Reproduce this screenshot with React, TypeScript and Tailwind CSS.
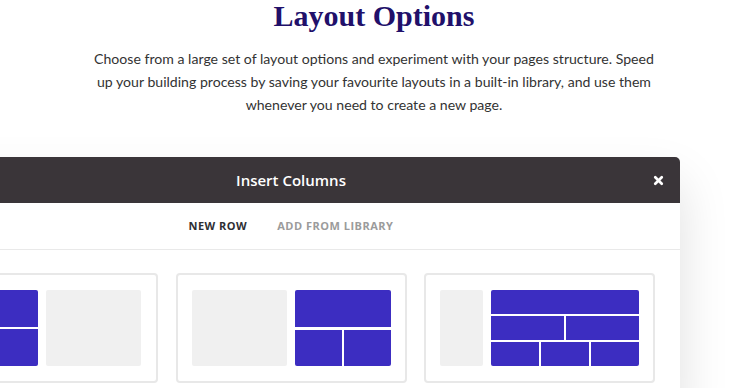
import { X } from "lucide-react";

const BLUE = "bg-[#3c2dc1]";

function Card({ children }: { children: React.ReactNode }) {
  return (
    <div className="flex h-[110px] w-[231px] shrink-0 gap-[8px] rounded-[4px] border-2 border-[#e8e8e8] bg-white px-[14px] py-[15px]">
      {children}
    </div>
  );
}

export default function App() {
  return (
    <div className="h-[388px] w-[748px] overflow-hidden bg-white" style={{ fontFamily: "Lato, 'Open Sans', sans-serif" }}>
      <h1 className="text-center text-[30px] font-bold leading-[31px] text-[#21106a] [font-family:'Liberation_Serif',serif]">
        Layout Options
      </h1>
      <p className="mx-auto mt-[16px] w-[568px] text-center text-[14.1px] leading-[23px] text-[#333333]">
        Choose from a large set of layout options and experiment with your pages structure. Speed up your building process by saving your favourite layouts in a built-in library, and use them whenever you need to create a new page.
      </p>

      <div className="ml-[-98px] mt-[41px] w-[778px] rounded-t-[5px] bg-white shadow-[0_25px_50px_rgba(0,0,0,0.13)] [font-family:'Open_Sans',sans-serif]">
        <div className="relative flex h-[46px] items-center justify-center rounded-t-[5px] bg-[#3a3539]">
          <span className="text-[15px] font-semibold text-white">Insert Columns</span>
          <X className="absolute right-[15px] top-[17px] h-[13px] w-[13px] text-white" strokeWidth={5} />
        </div>

        <div className="flex h-[47px] items-center justify-center gap-[30px] border-b border-[#e9e9e9] text-[11px] font-bold tracking-[0.5px]">
          <span className="text-[#2e2e33]">NEW ROW</span>
          <span className="text-[#9b9b9b]">ADD FROM LIBRARY</span>
        </div>

        <div className="flex gap-[17.5px] px-[25px] pt-[23px] pb-[20px]">
          <Card>
            <div className="grid w-[95px] grid-rows-2 gap-[2px]">
              <div className={`${BLUE} rounded-t-[2px]`} />
              <div className={`${BLUE} rounded-b-[2px]`} />
            </div>
            <div className="w-[95px] rounded-[2px] bg-[#f0f0f0]" />
          </Card>

          <Card>
            <div className="w-[95px] rounded-[2px] bg-[#f0f0f0]" />
            <div className="flex w-[96px] flex-col gap-[3px]">
              <div className={`${BLUE} h-[37px] rounded-t-[2px]`} />
              <div className="flex flex-1 gap-[2px]">
                <div className={`${BLUE} flex-1 rounded-bl-[2px]`} />
                <div className={`${BLUE} flex-1 rounded-br-[2px]`} />
              </div>
            </div>
          </Card>

          <Card>
            <div className="w-[43px] rounded-[2px] bg-[#f0f0f0]" />
            <div className="grid w-[148px] grid-rows-3 gap-[2px]">
              <div className={`${BLUE} rounded-t-[2px]`} />
              <div className="flex gap-[2px]">
                <div className={`${BLUE} flex-1`} />
                <div className={`${BLUE} flex-1`} />
              </div>
              <div className="flex gap-[2px]">
                <div className={`${BLUE} flex-1 rounded-bl-[2px]`} />
                <div className={`${BLUE} flex-1`} />
                <div className={`${BLUE} flex-1 rounded-br-[2px]`} />
              </div>
            </div>
          </Card>
        </div>
      </div>
    </div>
  );
}
